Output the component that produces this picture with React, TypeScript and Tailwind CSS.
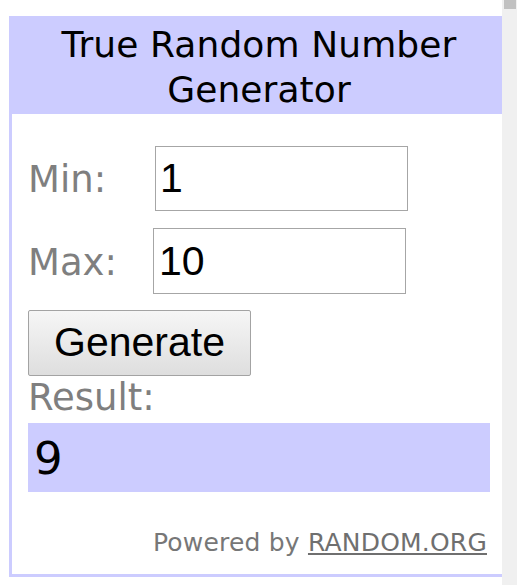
import { useState } from "react";

export default function App() {
  const [min, setMin] = useState("1");
  const [max, setMax] = useState("10");
  const [result, setResult] = useState("9");

  // pick a number between min and max
  const generate = () => {
    const lo = parseInt(min, 10);
    const hi = parseInt(max, 10);
    if (isNaN(lo) || isNaN(hi) || hi < lo) return;
    setResult(String(lo + Math.floor(Math.random() * (hi - lo + 1))));
  };

  return (
    <div className="flex w-[517px] h-[585px] bg-white overflow-hidden">
      <div className="w-[502px] h-full overflow-hidden">
        <div className="ml-[9px] mt-[16px] w-[500px] border-[3px] border-[#ccccff] bg-white font-['DejaVu_Sans',Verdana,sans-serif]">
          {/* Header */}
          <div className="bg-[#ccccff] pt-[3px] pb-[2px] text-center text-[36px] tracking-[0.1px] leading-[45px] text-black">
            True Random Number
            <br />
            Generator
          </div>

          <div className="px-[16px] pt-[32px] pb-[17px]">
            {/* Min */}
            <div className="flex items-baseline">
              <span className="w-[127px] text-[37px] leading-[45px] text-[#7f7f7f]">Min:</span>
              <input
                value={min}
                onChange={(e) => setMin(e.target.value)}
                className="w-[253px] h-[65px] border border-[#a6a6a6] bg-white pl-[4px] text-[41px] text-black outline-none font-['Liberation_Sans',Arial,sans-serif]"
              />
            </div>

            {/* Max */}
            <div className="flex items-baseline mt-[17px]">
              <span className="w-[125px] text-[37px] leading-[45px] text-[#7f7f7f]">Max:</span>
              <input
                value={max}
                onChange={(e) => setMax(e.target.value)}
                className="w-[253px] h-[66px] border border-[#a6a6a6] bg-white pl-[5px] text-[41px] text-black outline-none font-['Liberation_Sans',Arial,sans-serif]"
              />
            </div>

            <button
              onClick={generate}
              className="mt-[16px] flex items-center justify-center w-[223px] h-[66px] rounded-[2px] border border-[#a3a3a3] bg-gradient-to-b from-[#f6f6f6] to-[#dedede] text-[41px] text-black font-['Liberation_Sans',Arial,sans-serif]"
            >
              Generate
            </button>

            <div className="h-[47px] text-[37px] leading-[44px] text-[#7f7f7f]">Result:</div>

            <div className="h-[69px] bg-[#ccccff] pl-[6px] pt-[10px] text-[45px] leading-[52px] text-black">
              {result}
            </div>

            <div className="mt-[36px] pr-[3px] text-right text-[25px] tracking-[0.2px] leading-[29px] text-[#777777]">
              Powered by{" "}
              <a href="#" className="underline text-[#6f6f6f]">
                RANDOM.ORG
              </a>
            </div>
          </div>
        </div>
      </div>

      {/* scrollbar */}
      <div className="w-[15px] h-full bg-[#f0f0f0] pl-[2px] pr-[1px]">
        <div className="h-[9px] bg-[#c1c1c1]" />
      </div>
    </div>
  );
}
